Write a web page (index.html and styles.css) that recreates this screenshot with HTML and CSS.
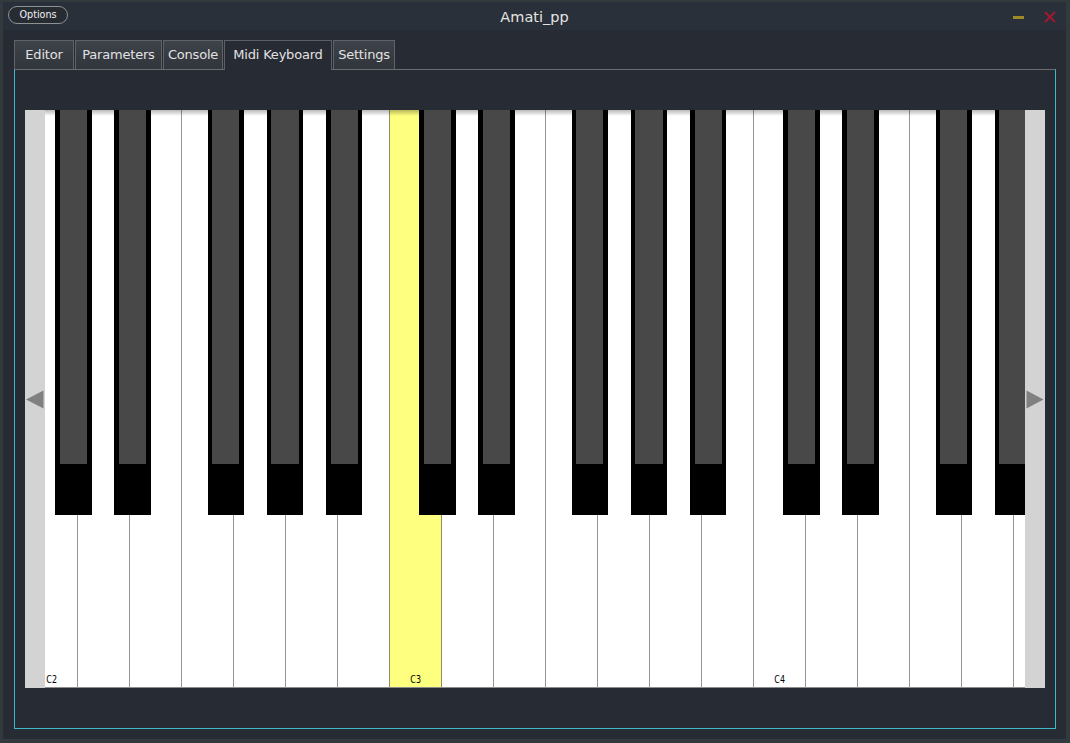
FILE: index.html
```html
<!DOCTYPE html>
<html>
<head>
<meta charset="utf-8">
<title>Amati_pp</title>
<link rel="stylesheet" href="styles.css">
</head>
<body>
<div class="window">
  <div class="titlebar">
    <button class="options">Options</button>
    <div class="title">Amati_pp</div>
    <div class="controls">
      <span class="minimize"></span>
      <svg class="close" width="12" height="12" viewBox="0 0 12 12"><path d="M1 1 L11 11 M11 1 L1 11" stroke="#a3192f" stroke-width="1.8" fill="none"/></svg>
    </div>
  </div>
  <div class="tabs">
    <div class="tab tab-editor">Editor</div>
    <div class="tab tab-params">Parameters</div>
    <div class="tab tab-console">Console</div>
    <div class="tab tab-midi selected">Midi Keyboard</div>
    <div class="tab tab-settings">Settings</div>
  </div>
  <div class="panel">
    <div class="keyboard">
      <div class="whites">
        <div class="white"><span class="label">C2</span></div>
        <div class="white"></div>
        <div class="white"></div>
        <div class="white"></div>
        <div class="white"></div>
        <div class="white"></div>
        <div class="white"></div>
        <div class="white down"><span class="label">C3</span></div>
        <div class="white"></div>
        <div class="white"></div>
        <div class="white"></div>
        <div class="white"></div>
        <div class="white"></div>
        <div class="white"></div>
        <div class="white"><span class="label">C4</span></div>
        <div class="white"></div>
        <div class="white"></div>
        <div class="white"></div>
        <div class="white"></div>
        <div class="white"></div>
      </div>
      <div class="shadow"></div>
      <div class="black" style="left:30.16px"></div>
      <div class="black" style="left:89.44px"></div>
      <div class="black" style="left:182.52px"></div>
      <div class="black" style="left:241.8px"></div>
      <div class="black" style="left:301.08px"></div>
      <div class="black" style="left:394.16px"></div>
      <div class="black" style="left:453.44px"></div>
      <div class="black" style="left:546.52px"></div>
      <div class="black" style="left:605.8px"></div>
      <div class="black" style="left:665.08px"></div>
      <div class="black" style="left:758.16px"></div>
      <div class="black" style="left:817.44px"></div>
      <div class="black" style="left:910.52px"></div>
      <div class="black" style="left:969.8px"></div>
      <div class="scroll scroll-left">
        <svg width="18" height="19" viewBox="0 0 18 19"><polygon points="0,9.5 17.5,0.5 17.5,18.5" fill="#808080"/></svg>
      </div>
      <div class="scroll scroll-right">
        <svg width="18" height="19" viewBox="0 0 18 19"><polygon points="17.5,9.5 0.5,0.5 0.5,18.5" fill="#808080"/></svg>
      </div>
    </div>
  </div>
</div>
</body>
</html>
```

FILE: styles.css
```css
* {
  box-sizing: border-box;
  margin: 0;
  padding: 0;
}

html, body {
  width: 1070px;
  height: 743px;
  overflow: hidden;
  background: #272b34;
}

body {
  font-family: "DejaVu Sans", sans-serif;
}

.window {
  width: 1070px;
  height: 743px;
  background: #272b34;
  border-style: solid;
  border-color: #323a3e;
  border-width: 2px 4px 4px 3px;
  display: flex;
  flex-direction: column;
}

/* ---------- title bar ---------- */
.titlebar {
  height: 28px;
  flex: none;
  background: #2a3039;
  display: grid;
  grid-template-columns: 1fr auto 1fr;
  align-items: start;
}

.options {
  justify-self: start;
  margin: 4px 0 0 5px;
  width: 60px;
  height: 18px;
  border: 1px solid #8f9294;
  border-radius: 9px;
  background: #272c33;
  color: #f2f2f2;
  font-family: "DejaVu Sans", sans-serif;
  font-size: 9.6px;
  line-height: 16px;
  text-align: center;
}

.title {
  margin-top: 5.5px;
  font-size: 14.5px;
  line-height: 18px;
  color: #e4e4e4;
}

.controls {
  justify-self: end;
  display: flex;
  align-items: center;
  gap: 20px;
  margin: 9px 10px 0 0;
}

.minimize {
  display: block;
  width: 11px;
  height: 3px;
  background: #9e8a24;
  margin-top: 1px;
}

.close {
  display: block;
}

/* ---------- tabs ---------- */
.tabs {
  flex: none;
  display: flex;
  gap: 1px;
  height: 29px;
  margin: 10px 0 0 11px;
  position: relative;
  z-index: 1;
}

.tab {
  height: 29px;
  border: 1px solid #5f6368;
  border-bottom: none;
  background: linear-gradient(#3e424a, #30343b);
  color: #e2e2e2;
  font-size: 13px;
  letter-spacing: -0.2px;
  display: flex;
  align-items: center;
  justify-content: center;
  padding-bottom: 2px;
}

.tab.selected {
  background: #272b34;
  height: 30px;
  padding-bottom: 3px;
  border-color: #5c6066;
}

.tab-editor { width: 60px; }
.tab-params { width: 87px; }
.tab-console { width: 60px; }
.tab-midi { width: 108px; }
.tab-settings { width: 62px; }

/* ---------- panel ---------- */
.panel {
  flex: none;
  height: 660px;
  width: 1042px;
  margin: 0 0 0 11px;
  border: 1px solid #3db9c9;
  border-top-color: #696d72;
  padding: 40px 10px;
}

.keyboard {
  position: relative;
  width: 1020px;
  height: 578px;
  overflow: hidden;
  background: #ffffff;
}

.whites {
  display: flex;
  height: 578px;
  width: 1040px;
}

.white {
  flex: none;
  width: 52px;
  height: 578px;
  background: #ffffff;
  border-left: 1px solid #959595;
  border-bottom: 1px solid #8c8c8c;
  display: flex;
  align-items: flex-end;
  justify-content: center;
  padding-bottom: 1px;
}

.white.down {
  background: #ffff7f;
  border-left-color: #8e8e66;
}

.white.down + .white {
  border-left-color: #8e8e66;
}

.label {
  font-size: 10px;
  line-height: 12px;
  color: #000000;
  transform: scaleX(0.8);
  display: block;
  margin-left: 1px;
}

.shadow {
  position: absolute;
  left: 0;
  top: 0;
  width: 1020px;
  height: 6px;
  background: linear-gradient(rgba(0, 0, 0, 0.28), rgba(0, 0, 0, 0));
}

.black {
  position: absolute;
  top: 0;
  width: 36.4px;
  height: 405px;
  background: #000000;
}

.black::before {
  content: "";
  position: absolute;
  left: 4.55px;
  right: 4.55px;
  top: 0;
  height: 354px;
  background: #484848;
}

.scroll {
  position: absolute;
  top: 0;
  width: 20px;
  height: 578px;
  background: #d3d3d3;
  display: flex;
  align-items: center;
  justify-content: center;
  z-index: 2;
}

.scroll svg {
  display: block;
}

.scroll-left {
  left: 0;
}

.scroll-right {
  right: 0;
}
```
